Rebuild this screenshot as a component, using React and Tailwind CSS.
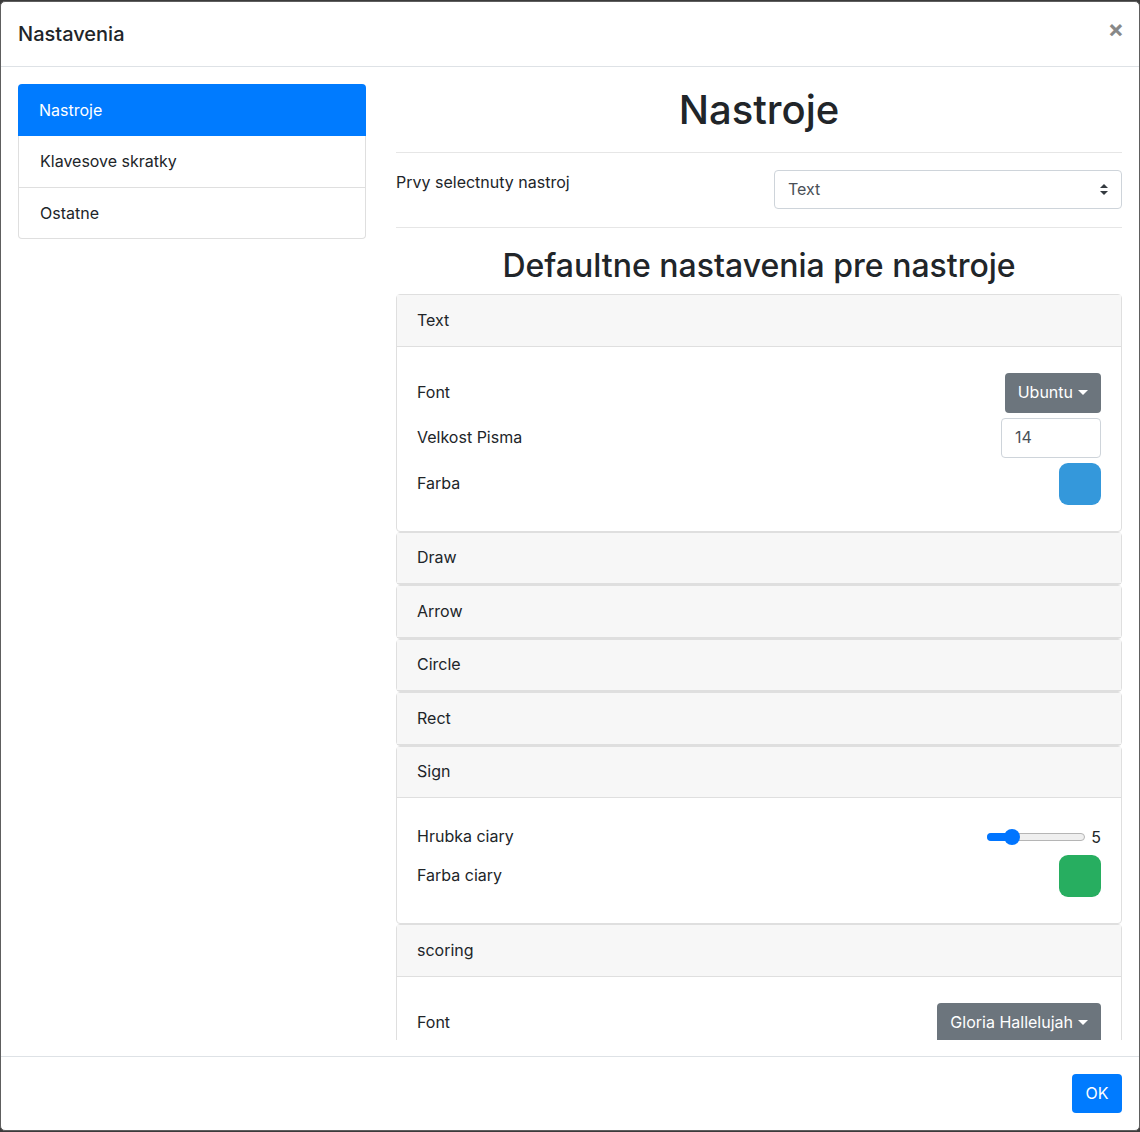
import { useState } from "react";

const menuItems = ["Nastroje", "Klavesove skratky", "Ostatne"];

const Caret = () => (
    <span className="ml-[5px] inline-block h-0 w-0 border-x-[5px] border-t-[5px] border-x-transparent border-t-white align-[3px]" />
);

const DropdownButton = ({ label }) => (
    <button className="flex h-[40px] items-center rounded-[4px] bg-[#6c757d] px-[13px] pb-px text-[16px] text-white">
        {label}
        <Caret />
    </button>
);

const Swatch = ({ color }) => (
    <div className={`h-[42px] w-[42px] rounded-[9px] ${color}`} />
);

const Row = ({ label, children, height = "h-[40px]" }) => (
    <div className={`flex ${height} items-center justify-between`}>
        <span className="-mt-px">{label}</span>
        {children}
    </div>
);

const Card = ({ title, children }) => (
    <div className="rounded-[4px] border border-[#dfdfdf]">
        <div className="flex h-[51.5px] items-center border-b border-[#dfdfdf] bg-[#f7f7f7] px-5 pb-px">
            {title}
        </div>
        {children && (
            <div className="flex flex-col gap-[5px] px-5 py-[26px]">
                {children}
            </div>
        )}
    </div>
);

const Slider = ({ value }) => (
    <div className="flex items-center">
        <div className="relative h-[16px] w-[98px]">
            <div className="absolute left-0 right-0 top-[4px] h-[8px] rounded-full border border-[#b5b5b5] bg-[#efefef]" />
            <div className="absolute left-0 top-[4px] h-[8px] w-[26px] rounded-full bg-[#0075ff]" />
            <div className="absolute left-[17px] top-0 h-[16px] w-[16px] rounded-full bg-[#0075ff]" />
        </div>
        <span className="ml-[6px]">{value}</span>
    </div>
);

export default function App() {
    const [active, setActive] = useState(0);

    return (
        <div className="h-[1132px] w-[1140px] bg-[#3b3b3b] pt-px font-['Inter',sans-serif] text-[16px] text-[#212529]">
            <div className="flex h-[1130px] w-[1140px] flex-col rounded-[5px] border border-[#5e5e5e] bg-white">
                {/* header */}
                <div className="flex h-[65px] shrink-0 items-center justify-between border-b border-[#dee2e6] pl-[17px] pr-[15px]">
                    <h5 className="-mt-px text-[20px] font-medium leading-[30px]">Nastavenia</h5>
                    <span className="-mt-[10px] text-[24px] font-bold leading-none text-[#888888]">
                        ×
                    </span>
                </div>

                {/* body */}
                <div className="flex min-h-0 flex-1 gap-[30px] pb-4 pl-[17px] pr-[17px] pt-[17px]">
                    <div className="w-[348px] shrink-0">
                        {menuItems.map((item, index) => (
                            <div
                                key={item}
                                onClick={() => setActive(index)}
                                className={
                                    index === active
                                        ? "flex h-[52px] cursor-pointer items-center rounded-t-[4px] bg-[#007bff] px-[21px] pb-px text-white"
                                        : index === menuItems.length - 1
                                          ? "flex h-[51px] cursor-pointer items-center rounded-b-[4px] border-x border-b border-[#dfdfdf] px-[21px] pb-px"
                                          : "flex h-[52px] cursor-pointer items-center border-x border-b border-[#dfdfdf] px-[21px] pb-px"
                                }
                            >
                                {item}
                            </div>
                        ))}
                    </div>

                    <div className="min-w-0 flex-1 overflow-hidden">
                        <h1 className="mt-[2px] text-center text-[40px] font-medium leading-[48px]">Nastroje</h1>
                        <hr className="mt-[18px] border-[#e6e6e6]" />

                        <div className="mt-[17px] grid grid-cols-2 gap-[30px]">
                            <div className="leading-[24px]">Prvy selectnuty nastroj</div>
                            <div className="flex h-[39px] items-center justify-between rounded-[4px] border border-[#ced4da] pb-px pl-[13px] pr-[13px] text-[#495057]">
                                <span>Text</span>
                                <svg width="8" height="11" viewBox="0 0 8 11">
                                    <path d="M4 0 L8 4 H0 Z M4 11 L0 7 H8 Z" fill="#343a40" />
                                </svg>
                            </div>
                        </div>
                        <hr className="mt-[18px] border-[#e6e6e6]" />

                        <h2 className="mt-[19px] text-center text-[32px] font-medium leading-[38px]">
                            Defaultne nastavenia pre nastroje
                        </h2>

                        <div className="mt-[9px]">
                            <Card title="Text">
                                <Row label="Font">
                                    <DropdownButton label="Ubuntu" />
                                </Row>
                                <Row label="Velkost Pisma">
                                    <div className="flex h-[40px] w-[100px] items-center rounded-[4px] border border-[#ced4da] px-[13px] pb-px text-[#495057]">
                                        14
                                    </div>
                                </Row>
                                <Row label="Farba" height="h-[42px]">
                                    <Swatch color="bg-[#3498db]" />
                                </Row>
                            </Card>
                            <Card title="Draw" />
                            <Card title="Arrow" />
                            <Card title="Circle" />
                            <Card title="Rect" />
                            <Card title="Sign">
                                <Row label="Hrubka ciary" height="h-[25px]">
                                    <Slider value={5} />
                                </Row>
                                <Row label="Farba ciary" height="h-[43px]">
                                    <Swatch color="bg-[#27ae60]" />
                                </Row>
                            </Card>
                            <Card title="scoring">
                                <Row label="Font">
                                    <DropdownButton label="Gloria Hallelujah" />
                                </Row>
                            </Card>
                        </div>
                    </div>
                </div>

                {/* footer */}
                <div className="flex h-[74px] shrink-0 items-start justify-end border-t border-[#dee2e6] pr-[17px] pt-[17px]">
                    <button className="h-[39px] w-[50px] rounded-[4px] bg-[#007bff] pb-px text-white">OK</button>
                </div>
            </div>
        </div>
    );
}
